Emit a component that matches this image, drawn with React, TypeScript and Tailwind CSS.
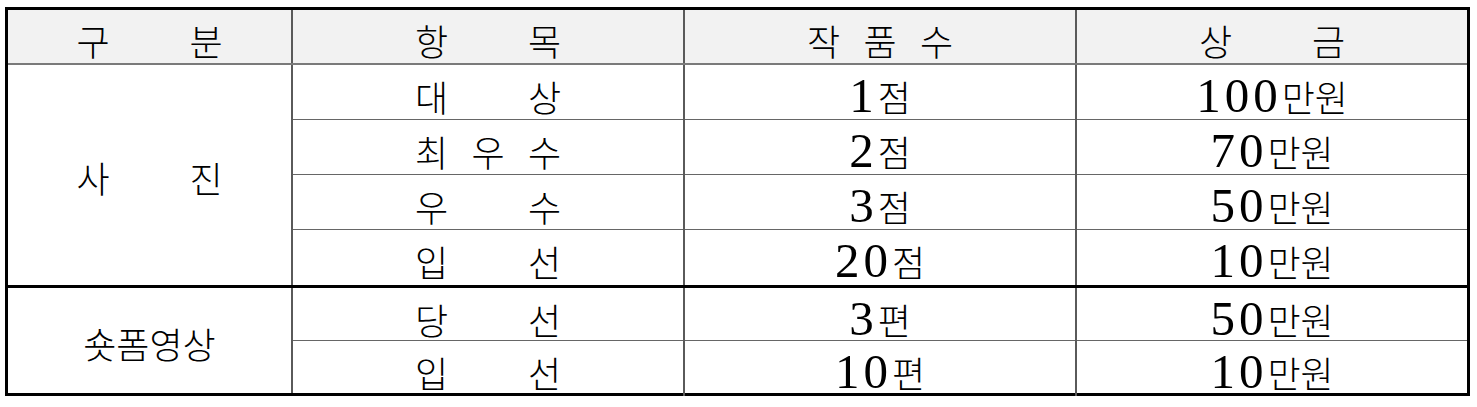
import React from "react";

const KR = "font-[family-name:'Noto_Sans_CJK_KR',sans-serif]";

function Spaced({ text }: { text: string }) {
  const chars = text.split("");
  return (
    <div className="flex w-[146px] justify-between">
      {chars.map((c, i) => (
        <span key={i}>{c}</span>
      ))}
    </div>
  );
}

function Mixed({ text }: { text: string }) {
  const m = text.match(/^(\d+)(.*)$/);
  if (!m) return <span>{text}</span>;
  return (
    <span className="whitespace-nowrap">
      <span className="font-[family-name:'Liberation_Serif',serif] text-[49px] font-normal tracking-[4px]">{m[1]}</span>
      <span>{m[2]}</span>
    </span>
  );
}

function Cell({ children, first }: { children: React.ReactNode; first?: boolean }) {
  return (
    <div
      className={
        "flex items-center justify-center pt-[6px] " +
        (first ? "" : "border-l-2 border-[#5a5a5a]")
      }
    >
      {children}
    </div>
  );
}

type Row = { item: string; count: string; prize: string };

function Group({ label, spaced, rows, rowH }: { label: string; spaced: boolean; rows: Row[]; rowH: string[] }) {
  return (
    <div className="flex">
      <div className="flex w-[283px] items-center justify-center pt-[4px]">
        {spaced ? <Spaced text={label} /> : <span>{label}</span>}
      </div>
      <div className="flex flex-col border-l-2 border-[#5a5a5a]">
        {rows.map((r, i) => (
          <div
            key={i}
            className={
              "grid grid-cols-[390px_392px_392px] " +
              rowH[i] +
              (i < rows.length - 1 ? " border-b border-[#666666]" : "")
            }
          >
            <Cell first>
              <Spaced text={r.item} />
            </Cell>
            <Cell>
              <Mixed text={r.count} />
            </Cell>
            <Cell>
              <Mixed text={r.prize} />
            </Cell>
          </div>
        ))}
      </div>
    </div>
  );
}

export default function App() {
  return (
    <div className="min-h-[407px] w-[1477px] bg-white pl-[5px] pt-[7px]">
      <div className={"w-[1465px] border-[3px] border-black text-[36px] leading-none font-light text-black " + KR}>
        <div className="grid h-[55px] grid-cols-[283px_392px_392px_392px] border-b-2 border-[#7a7a7a] bg-[#f2f2f2]">
          <Cell first>
            <Spaced text="구분" />
          </Cell>
          <Cell>
            <Spaced text="항목" />
          </Cell>
          <Cell>
            <Spaced text="작품수" />
          </Cell>
          <Cell>
            <Spaced text="상금" />
          </Cell>
        </div>
        <Group
          label="사진"
          spaced
          rowH={["h-[55px]", "h-[55px]", "h-[55px]", "h-[55px]"]}
          rows={[
            { item: "대상", count: "1점", prize: "100만원" },
            { item: "최우수", count: "2점", prize: "70만원" },
            { item: "우수", count: "3점", prize: "50만원" },
            { item: "입선", count: "20점", prize: "10만원" },
          ]}
        />
        <div className="h-[3px] bg-black" />
        <Group
          label="숏폼영상"
          spaced={false}
          rowH={["h-[53px]", "h-[52px]"]}
          rows={[
            { item: "당선", count: "3편", prize: "50만원" },
            { item: "입선", count: "10편", prize: "10만원" },
          ]}
        />
      </div>
    </div>
  );
}
